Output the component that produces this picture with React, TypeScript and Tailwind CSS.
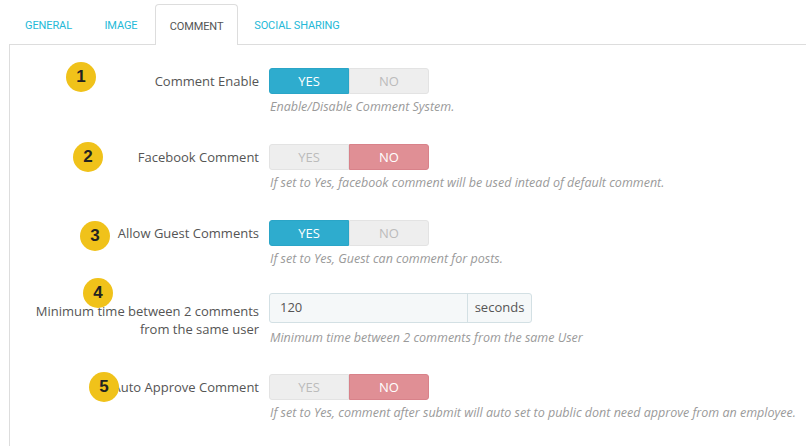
import React from "react";

const tabs = ["General", "Image", "Comment", "Social Sharing"];
const tabWidths = ["w-[77px]", "w-[64px]", "w-[83px]", "w-[114px]"];

function Toggle({ on }: { on: boolean }) {
  return (
    <div className="flex h-[26px] w-[160px] text-[13px] leading-none">
      <div
        className={
          on
            ? "flex w-[80px] items-center justify-center rounded-l-[3px] border border-[#2aa5c7] bg-[#2eacce] text-white"
            : "flex w-[80px] items-center justify-center rounded-l-[3px] border border-[#e3e3e3] bg-[#eeeeee] text-[#bbbbbb]"
        }
      >
        YES
      </div>
      <div
        className={
          on
            ? "flex w-[80px] items-center justify-center rounded-r-[3px] border border-[#e3e3e3] bg-[#eeeeee] text-[#bbbbbb]"
            : "flex w-[80px] items-center justify-center rounded-r-[3px] border border-[#d8828a] bg-[#e08f95] text-white"
        }
      >
        NO
      </div>
    </div>
  );
}

function Help({ children }: { children: React.ReactNode }) {
  return (
    <p className="mt-[5px] pl-[1px] text-[12.5px] italic leading-[16px] text-[#9a9a9a]">
      {children}
    </p>
  );
}

function Badge({ n, className }: { n: number; className: string }) {
  return (
    <span
      className={
        "absolute flex h-[30px] w-[30px] items-center justify-center rounded-full bg-[#f0c21a] text-[17px] font-bold text-[#222] " +
        className
      }
      style={{ fontFamily: "'Liberation Sans', Arial, sans-serif" }}
    >
      {n}
    </span>
  );
}

function Row({
  label,
  help,
  on,
  className,
}: {
  label: string;
  help: string;
  on: boolean;
  className: string;
}) {
  return (
    <div className={"flex " + className}>
      <div className="w-[249px] shrink-0 text-right text-[13px] leading-[26px] text-[#555]">
        {label}
      </div>
      <div className="ml-[10px]">
        <Toggle on={on} />
        <Help>{help}</Help>
      </div>
    </div>
  );
}

export default function App() {
  return (
    <div
      className="relative h-[446px] w-[806px] overflow-hidden bg-white"
      style={{ fontFamily: "'Open Sans', sans-serif" }}
    >
      {/* tabs */}
      <div className="flex h-[45px] pl-[10px] pt-[4px]">
        {tabs.map((t, i) => (
          <div
            key={t}
            className={
              i === 2
                ? `${tabWidths[i]} relative z-10 mr-[2px] flex h-[41px] items-center justify-center rounded-t-[4px] border border-b-0 border-[#dddddd] bg-white pt-[4px] text-[11px] uppercase tracking-[-0.1px] text-[#555]`
                : `${tabWidths[i]} mr-[2px] flex h-[40px] items-center justify-center pt-[4px] text-[11px] uppercase tracking-[-0.1px] text-[#25b9d7]`
            }
            style={{ fontFamily: "Roboto, sans-serif" }}
          >
            {t}
          </div>
        ))}
      </div>

      {/* panel */}
      <div className="-mt-[1px] ml-[9px] h-[420px] border-l border-t border-[#dddddd] pt-[23px]">
        <Row
          label="Comment Enable"
          help="Enable/Disable Comment System."
          on={true}
          className=""
        />
        <Row
          label="Facebook Comment"
          help="If set to Yes, facebook comment will be used intead of default comment."
          on={false}
          className="mt-[29px]"
        />
        <Row
          label="Allow Guest Comments"
          help="If set to Yes, Guest can comment for posts."
          on={true}
          className="mt-[29px]"
        />

        <div className="mt-[26px] flex">
          <div className="w-[249px] shrink-0 pt-[9px] text-right text-[13px] leading-[18px] text-[#555]">
            Minimum time between 2 comments
            <br />
            from the same user
          </div>
          <div className="ml-[10px]">
            <div className="flex h-[30px] w-[263px] rounded-[3px] border border-[#d3e0e4] bg-[#f5f8f9] text-[13px] text-[#555]">
              <div className="flex flex-1 items-center pl-[10px]">120</div>
              <div className="flex w-[64px] items-center justify-center border-l border-[#d3e0e4]">
                seconds
              </div>
            </div>
            <p className="mt-[7px] pl-[1px] text-[12.5px] italic leading-[16px] text-[#9a9a9a]">
              Minimum time between 2 comments from the same User
            </p>
          </div>
        </div>

        <Row
          label="Auto Approve Comment"
          help="If set to Yes, comment after submit will auto set to public dont need approve from an employee."
          on={false}
          className="mt-[28px]"
        />
      </div>

      {/* annotation badges */}
      <Badge n={1} className="left-[66px] top-[62px]" />
      <Badge n={2} className="left-[73px] top-[142px]" />
      <Badge n={3} className="left-[80px] top-[221px]" />
      <Badge n={4} className="left-[83px] top-[278px]" />
      <Badge n={5} className="left-[89px] top-[372px]" />
    </div>
  );
}
